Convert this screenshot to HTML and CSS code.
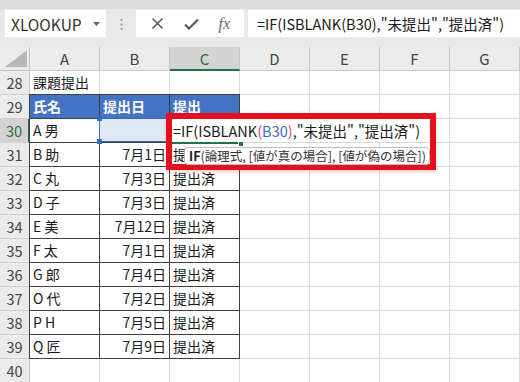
FILE: index.html
```html
<!DOCTYPE html>
<html lang="ja">
<head>
    <meta charset="UTF-8">
    <title>IF ISBLANK</title>
    <link rel="stylesheet" href="styles.css">
</head>
<body>
<div class="toolbar">
    <div class="name-box">
        <span>XLOOKUP</span>
        <svg class="caret" width="7" height="4" viewBox="0 0 7 4"><path d="M0 0h7L3.5 4z" fill="#666"/></svg>
    </div>
    <svg class="grip" width="3" height="11" viewBox="0 0 3 11">
        <rect x="0.5" y="0" width="2" height="2" fill="#a0a0a0"/>
        <rect x="0.5" y="4.5" width="2" height="2" fill="#a0a0a0"/>
        <rect x="0.5" y="9" width="2" height="2" fill="#a0a0a0"/>
    </svg>
    <div class="fx-buttons">
        <svg width="13" height="13" viewBox="0 0 13 13"><path d="M1.5 1.5l10 10M11.5 1.5l-10 10" stroke="#5a5a5a" stroke-width="1.6" fill="none"/></svg>
        <svg width="15" height="12" viewBox="0 0 15 12"><path d="M1 6.5l4 4L14 1.5" stroke="#5a5a5a" stroke-width="2.2" fill="none"/></svg>
        <span class="fx">fx</span>
    </div>
    <div class="formula-input">=IF(ISBLANK(B30),"未提出","提出済")</div>
</div>

<div class="sheet">
    <div class="grid">
        <div class="corner"><svg width="22" height="17" viewBox="0 0 22 17"><path d="M22 0V17H0z" fill="#b8b8b8"/></svg></div>
        <div class="col-head">A</div><div class="col-head">B</div><div class="col-head active">C</div><div class="col-head">D</div><div class="col-head">E</div><div class="col-head">F</div><div class="col-head">G</div>

        <div class="row-head">28</div><div class="cell">課題提出</div><div class="cell"></div><div class="cell"></div><div class="cell"></div><div class="cell"></div><div class="cell"></div><div class="cell"></div>

        <div class="row-head">29</div><div class="cell t th first top">氏名</div><div class="cell t th top">提出日</div><div class="cell t th top">提出</div><div class="cell"></div><div class="cell"></div><div class="cell"></div><div class="cell"></div>

        <div class="row-head active">30</div><div class="cell t first">A 男</div><div class="cell t picked"></div><div class="cell t"></div><div class="cell"></div><div class="cell"></div><div class="cell"></div><div class="cell"></div>

        <div class="row-head">31</div><div class="cell t first">B 助</div><div class="cell t num">7月1日</div><div class="cell t">提出済</div><div class="cell"></div><div class="cell"></div><div class="cell"></div><div class="cell"></div>

        <div class="row-head">32</div><div class="cell t first">C 丸</div><div class="cell t num">7月3日</div><div class="cell t">提出済</div><div class="cell"></div><div class="cell"></div><div class="cell"></div><div class="cell"></div>

        <div class="row-head">33</div><div class="cell t first">D 子</div><div class="cell t num">7月3日</div><div class="cell t">提出済</div><div class="cell"></div><div class="cell"></div><div class="cell"></div><div class="cell"></div>

        <div class="row-head">34</div><div class="cell t first">E 美</div><div class="cell t num">7月12日</div><div class="cell t">提出済</div><div class="cell"></div><div class="cell"></div><div class="cell"></div><div class="cell"></div>

        <div class="row-head">35</div><div class="cell t first">F 太</div><div class="cell t num">7月1日</div><div class="cell t">提出済</div><div class="cell"></div><div class="cell"></div><div class="cell"></div><div class="cell"></div>

        <div class="row-head">36</div><div class="cell t first">G 郎</div><div class="cell t num">7月4日</div><div class="cell t">提出済</div><div class="cell"></div><div class="cell"></div><div class="cell"></div><div class="cell"></div>

        <div class="row-head">37</div><div class="cell t first">O 代</div><div class="cell t num">7月2日</div><div class="cell t">提出済</div><div class="cell"></div><div class="cell"></div><div class="cell"></div><div class="cell"></div>

        <div class="row-head">38</div><div class="cell t first">P H</div><div class="cell t num">7月5日</div><div class="cell t">提出済</div><div class="cell"></div><div class="cell"></div><div class="cell"></div><div class="cell"></div>

        <div class="row-head">39</div><div class="cell t first">Q 匠</div><div class="cell t num">7月9日</div><div class="cell t">提出済</div><div class="cell"></div><div class="cell"></div><div class="cell"></div><div class="cell"></div>

        <div class="row-head">40</div><div class="cell"></div><div class="cell"></div><div class="cell"></div><div class="cell"></div><div class="cell"></div><div class="cell"></div><div class="cell"></div>
    </div>

    <!-- C30 in edit mode, marked with a red frame -->
    <div class="edit-box">
        <div class="edit-line">=IF(ISBLANK<span class="paren">(</span><span class="ref">B30</span><span class="paren">)</span>,"未提出","提出済")</div>
        <div class="active-mark"></div>
        <div class="tip"><b>IF</b>(論理式, [値が真の場合], [値が偽の場合])</div>
    </div>
</div>
</body>
</html>
```

FILE: styles.css
```css
body {
    margin: 0;
    width: 520px;
    height: 382px;
    overflow: hidden;
    background: #fff;
    font-family: "Noto Sans CJK JP", "Noto Sans", sans-serif;
    color: #1a1a1a;
}
.toolbar {
    height: 47px;
    box-sizing: border-box;
    background: #e8e8e8;
    border-top: 9px solid #dcdcdc;
    padding: 1px 0 0 5px;
    display: flex;
    align-items: flex-start;
}
.name-box {
    width: 101px;
    height: 27px;
    box-sizing: border-box;
    background: #fff;
    display: flex;
    align-items: center;
    justify-content: space-between;
    padding: 0 6px 0 6px;
    font-size: 15.5px;
    color: #333;
}
.grip {
    margin: 9px 13px 0 14px;
}
.fx-buttons {
    width: 108px;
    height: 27px;
    background: #fff;
    display: flex;
    align-items: center;
    justify-content: space-around;
    padding: 0 4px 0 5px;
    box-sizing: border-box;
}
.fx {
    font-family: "Liberation Serif", serif;
    font-style: italic;
    font-size: 16px;
    color: #666;
}
.formula-input {
    flex: 1;
    height: 27px;
    margin-left: 4px;
    background: #fff;
    font-size: 14.5px;
    line-height: 27px;
    padding-left: 9px;
    white-space: nowrap;
    overflow: hidden;
}
.sheet {
    position: relative;
}
.grid {
    display: grid;
    grid-template-columns: 30px repeat(7, 70px);
    grid-auto-rows: 24px;
}
.corner, .col-head, .row-head {
    background: #ebebeb;
    box-sizing: border-box;
    color: #444;
}
.corner {
    border-right: 1px solid #c6c6c6;
    border-bottom: 1px solid #c6c6c6;
    display: flex;
    align-items: flex-end;
    justify-content: flex-end;
    padding: 0 2px 3px 0;
}
.col-head {
    border-right: 1px solid #c6c6c6;
    border-bottom: 1px solid #c6c6c6;
    text-align: center;
    font-size: 15px;
    line-height: 23px;
}
.col-head.active {
    background: #d3d3d3;
    color: #217346;
    border-bottom: 2px solid #217346;
}
.row-head {
    border-right: 1px solid #c6c6c6;
    border-bottom: 1px solid #d0d0d0;
    text-align: center;
    font-size: 14.5px;
    line-height: 23px;
}
.row-head.active {
    background: #d3d3d3;
    color: #217346;
    border-right: 2px solid #217346;
}
.cell {
    box-sizing: border-box;
    border-right: 1px solid #d9d9d9;
    border-bottom: 1px solid #d9d9d9;
    font-size: 14px;
    line-height: 23px;
    padding: 0 3px;
    white-space: nowrap;
    overflow: hidden;
}
.cell.t {
    border-right-color: #404040;
    border-bottom-color: #404040;
}
.cell.first {
    box-shadow: -1px 0 0 #404040;
}
.cell.top {
    box-shadow: 0 -1px 0 #404040;
}
.cell.first.top {
    box-shadow: -1px 0 0 #404040, 0 -1px 0 #404040, -1px -1px 0 #404040;
}
.cell.th {
    background: #4472c4;
    color: #fff;
    font-weight: bold;
}
.cell.num {
    text-align: right;
}
.cell.picked {
    position: relative;
    overflow: visible;
    background: #e0e8f5;
}
.cell.picked::before {
    content: "";
    position: absolute;
    left: -1px;
    top: -1px;
    right: -1px;
    bottom: 0;
    border: 1px solid #2f6cc8;
}
.cell.picked::after {
    content: "";
    position: absolute;
    left: -3px;
    top: -3px;
    width: 5px;
    height: 5px;
    background: #2f6cc8;
    box-shadow: 71px 0 0 #2f6cc8, 0 23px 0 #2f6cc8, 71px 23px 0 #2f6cc8;
}
.edit-box {
    position: absolute;
    left: 166px;
    top: 66px;
    width: 270px;
    height: 57px;
    box-sizing: border-box;
    border: 6px solid #e3111d;
    box-shadow: 0 2px 3px rgba(227, 17, 29, 0.2);
}
.edit-line {
    height: 23px;
    background: #fff;
    font-size: 14.5px;
    line-height: 23px;
    padding-left: 1px;
    white-space: nowrap;
}
.edit-line .ref {
    color: #3c6ec4;
}
.edit-line .paren {
    color: #d0457a;
}
.active-mark {
    position: relative;
    width: 69px;
    height: 2px;
    background: #217346;
}
.active-mark::after {
    content: "";
    position: absolute;
    right: -3px;
    top: -1px;
    width: 4px;
    height: 4px;
    background: #217346;
    border: 1px solid #fff;
}
.tip {
    position: absolute;
    left: 12px;
    top: 28px;
    width: 246px;
    height: 18px;
    box-sizing: border-box;
    background: #fff;
    border: 1px solid #bdbdbd;
    border-radius: 4px;
    font-size: 12.5px;
    line-height: 16px;
    padding-left: 4px;
    white-space: nowrap;
    color: #333;
}
.tip b {
    color: #222;
}
```
